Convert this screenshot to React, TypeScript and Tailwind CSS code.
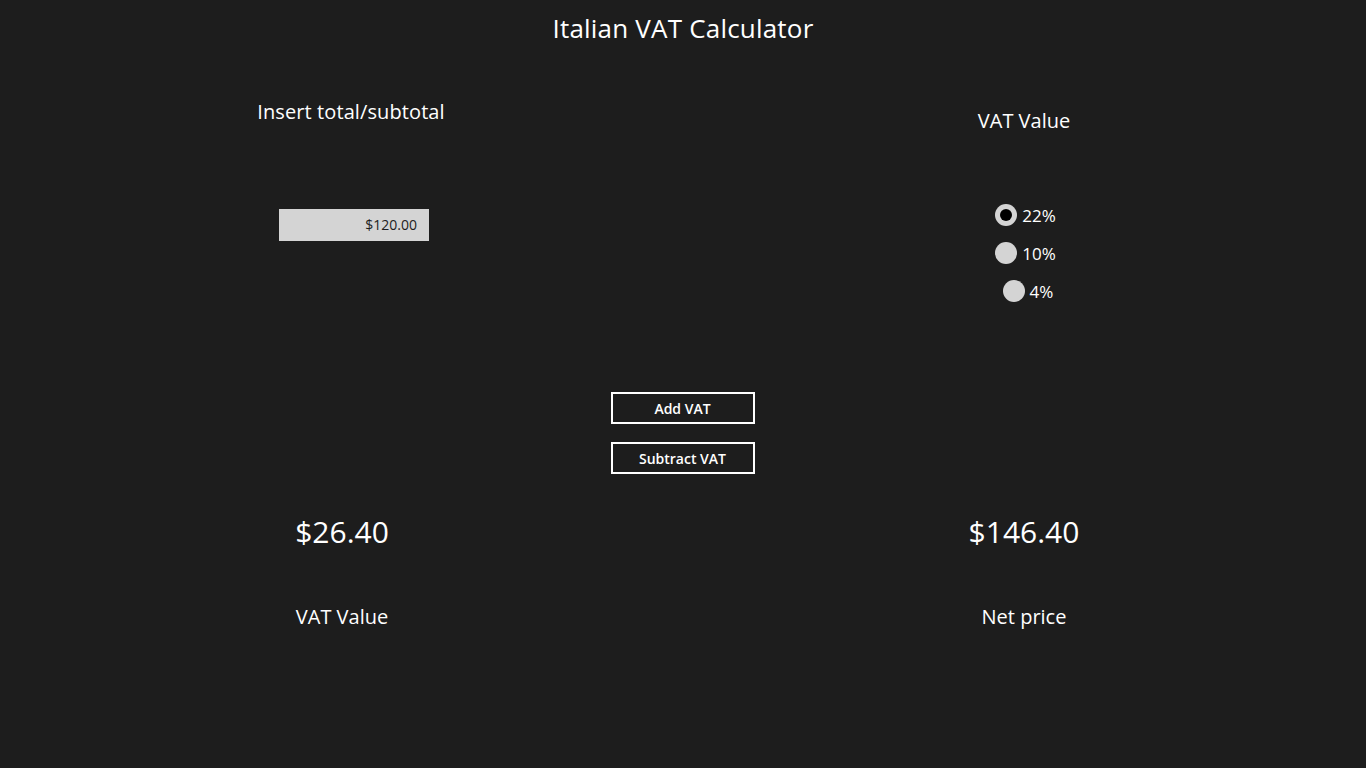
import React from "react";

const font = { fontFamily: '"Open Sans", "Noto Sans", sans-serif' };

function Radio({ label, checked, offset }: { label: string; checked?: boolean; offset?: boolean }) {
  return (
    <div className={`h-[38px] flex items-center justify-center gap-[5px] ${offset ? "pl-[5px]" : ""}`}>
      <div className="w-[22px] h-[22px] rounded-full bg-[#d4d4d4] flex items-center justify-center">
        {checked && <div className="w-[12px] h-[12px] rounded-full bg-black" />}
      </div>
      <span className="text-[17px] text-white leading-none">{label}</span>
    </div>
  );
}

export default function App() {
  return (
    <div className="w-[1366px] h-[768px] bg-[#1d1d1d] text-white overflow-hidden" style={font}>
      <div className="h-[56px] flex items-center justify-center text-[26px] tracking-[0.2px]">Italian VAT Calculator</div>
      <div className="h-[336px] flex justify-between pl-[200px] pr-[192px]">
        <div className="w-[300px] flex flex-col items-center">
          <div className="mt-[36px] ml-[2px] h-[40px] flex items-center text-[20px] tracking-[0.1px]">Insert total/subtotal</div>
          <div className="mt-[77px] ml-[8px] w-[150px] h-[32px] bg-[#d4d4d4] text-[#1d1d1d] text-[14px] flex items-center justify-end pr-[12px] pb-[2px]">
            $120.00
          </div>
        </div>
        <div className="w-[300px] flex flex-col items-center">
          <div className="mt-[45px] h-[40px] flex items-center text-[20px]">VAT Value</div>
          <div className="mt-[55px] ml-[3px] flex flex-col">
            <Radio label="22%" checked />
            <Radio label="10%" />
            <Radio label="4%" offset />
          </div>
        </div>
      </div>
      <div className="flex flex-col items-center gap-[18px] pr-[1px]">
        <div className="w-[144px] h-[32px] border-2 border-white flex items-center justify-center text-[14px] font-semibold">Add VAT</div>
        <div className="w-[144px] h-[32px] border-2 border-white flex items-center justify-center text-[14px] font-semibold">Subtract VAT</div>
      </div>
      <div className="flex justify-between pl-[192px] pr-[192px]">
        <div className="w-[300px] flex flex-col items-center">
          <div className="mt-[37px] h-[40px] flex items-center text-[30px]">$26.40</div>
          <div className="mt-[46px] h-[40px] flex items-center text-[20px]">VAT Value</div>
        </div>
        <div className="w-[300px] flex flex-col items-center">
          <div className="mt-[37px] h-[40px] flex items-center text-[30px]">$146.40</div>
          <div className="mt-[46px] h-[40px] flex items-center text-[20px]">Net price</div>
        </div>
      </div>
    </div>
  );
}
